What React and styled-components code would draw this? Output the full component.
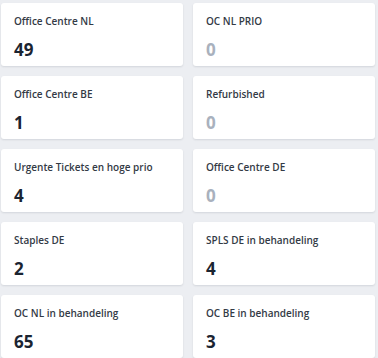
import React from "react";
import styled, { createGlobalStyle } from "styled-components";

const Global = createGlobalStyle`
  html, body { margin: 0; padding: 0; background: #eceef2; }
  body { font-family: "Open Sans", "Noto Sans", sans-serif; }
`;

const Grid = styled.div`
  display: grid;
  grid-template-columns: 182px 182px;
  column-gap: 10px;
  row-gap: 10px;
  padding: 3px 0 0 1px;
`;

const Card = styled.div`
  background: #ffffff;
  border-radius: 3px;
  height: 63px;
  box-sizing: border-box;
  padding: 11px 13px 0 13px;
  box-shadow: 0 1px 2px rgba(30, 40, 60, 0.12);
  display: flex;
  flex-direction: column;
`;

const Title = styled.div`
  font-size: 10px;
  font-weight: 600;
  color: #333a45;
  line-height: 14px;
`;

const Value = styled.div`
  margin-top: 11px;
  font-size: 17px;
  font-weight: 700;
  line-height: 22px;
  color: ${(p) => (p.$zero ? "#a9b1bd" : "#1b2431")};
`;

const items = [
  ["Office Centre NL", 49],
  ["OC NL PRIO", 0],
  ["Office Centre BE", 1],
  ["Refurbished", 0],
  ["Urgente Tickets en hoge prio", 4],
  ["Office Centre DE", 0],
  ["Staples DE", 2],
  ["SPLS DE in behandeling", 4],
  ["OC NL in behandeling", 65],
  ["OC BE in behandeling", 3],
];

export default function App() {
  return (
    <>
      <Global />
      <Grid>
        {items.map(([t, v]) => (
          <Card key={t}>
            <Title>{t}</Title>
            <Value $zero={v === 0}>{v}</Value>
          </Card>
        ))}
      </Grid>
    </>
  );
}
